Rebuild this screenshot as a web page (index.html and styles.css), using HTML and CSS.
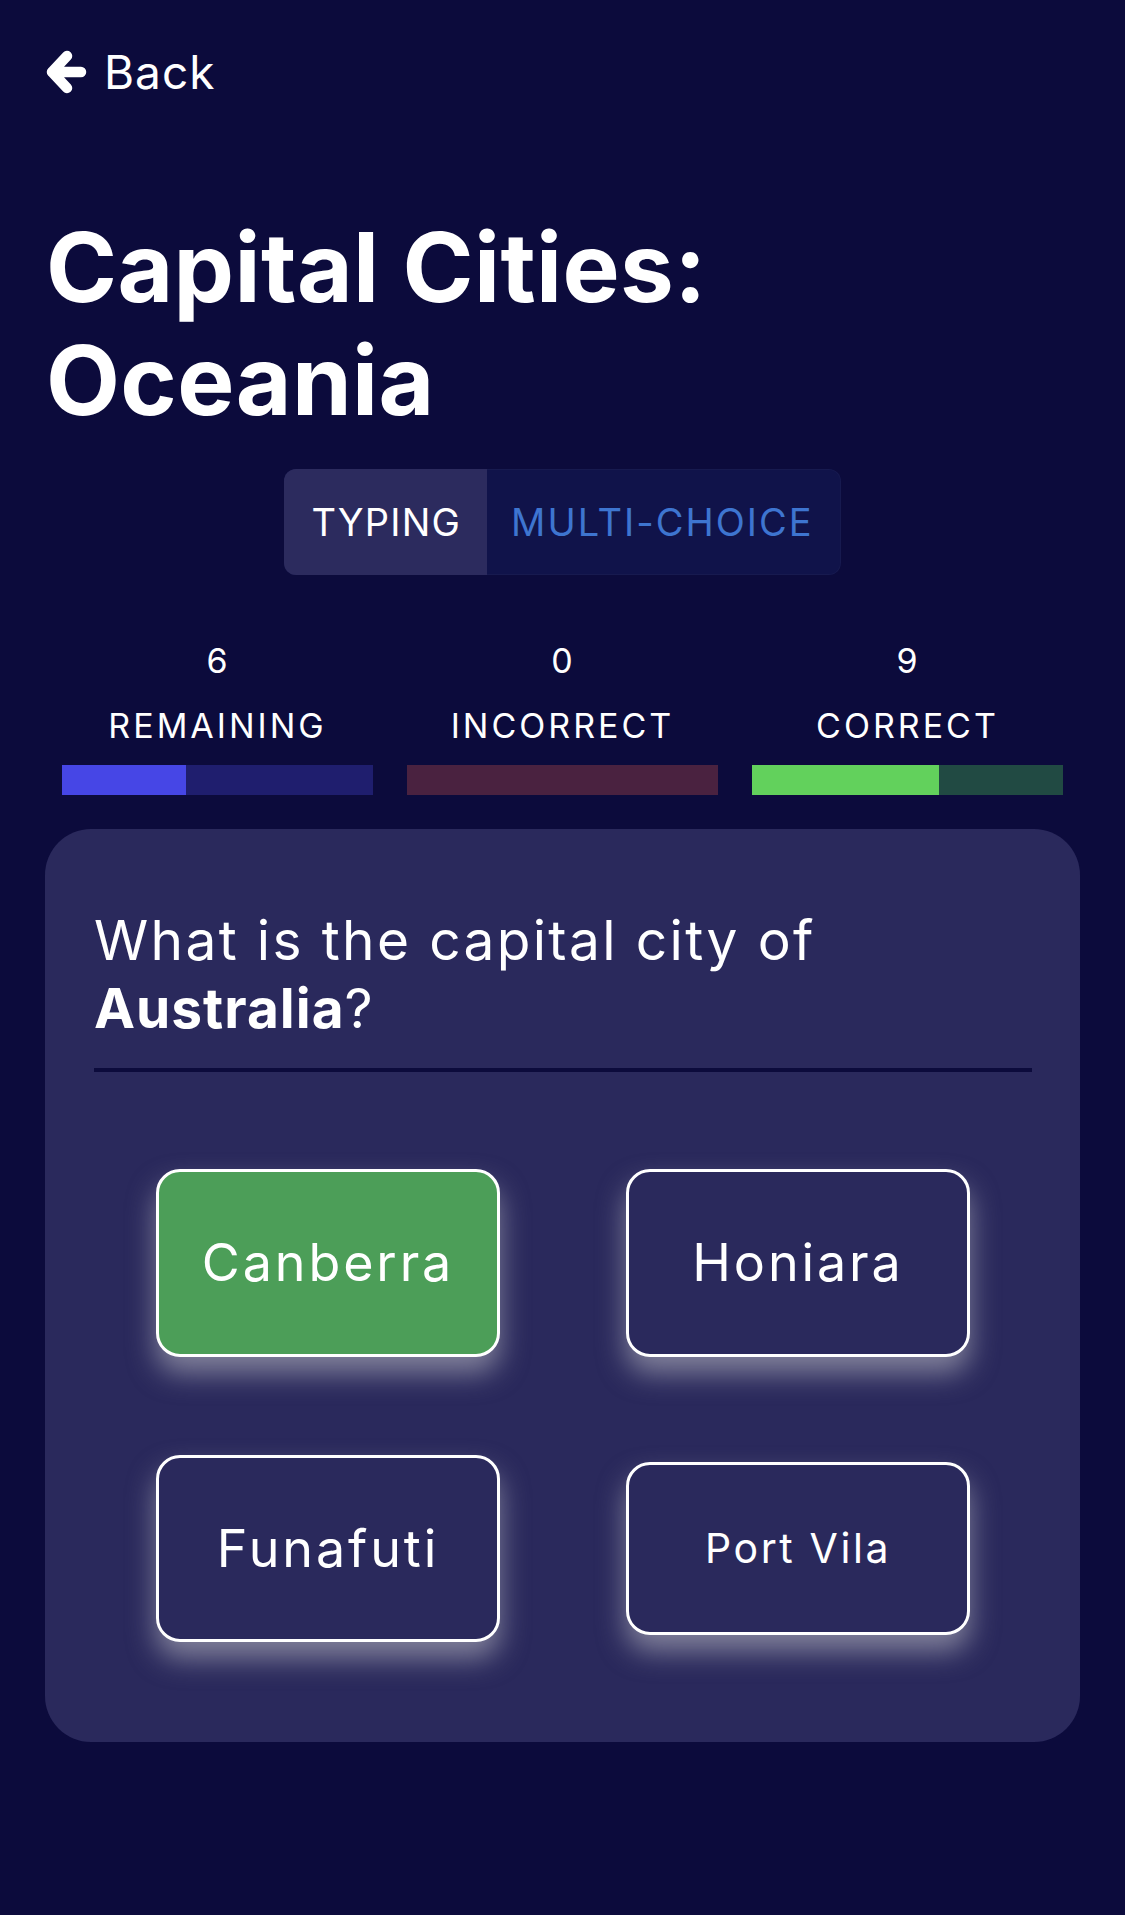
FILE: index.html
```html
<!DOCTYPE html>
<html lang="en">
<head>
<meta charset="utf-8">
<title>Capital Cities: Oceania</title>
<link rel="stylesheet" href="styles.css">
</head>
<body>
<main class="page">
  <a class="back" href="#">
    <svg class="back-icon" width="42" height="44" viewBox="0 0 42 44" aria-hidden="true">
      <path d="M22 6 L7 22 L22 38 M7 22 H36" fill="none" stroke="#fff" stroke-width="10.5" stroke-linecap="round" stroke-linejoin="round"/>
    </svg>
    <span>Back</span>
  </a>

  <h1 class="title">Capital Cities:<br>Oceania</h1>

  <div class="toggle-wrap">
    <div class="toggle">
      <span class="toggle-opt active">TYPING</span>
      <span class="toggle-opt">MULTI-CHOICE</span>
    </div>
  </div>

  <section class="stats">
    <div class="stat">
      <div class="stat-num">6</div>
      <div class="stat-label">REMAINING</div>
      <div class="bar bar-remaining"><div class="fill" style="width:40%"></div></div>
    </div>
    <div class="stat">
      <div class="stat-num">0</div>
      <div class="stat-label">INCORRECT</div>
      <div class="bar bar-incorrect"><div class="fill" style="width:0%"></div></div>
    </div>
    <div class="stat">
      <div class="stat-num">9</div>
      <div class="stat-label">CORRECT</div>
      <div class="bar bar-correct"><div class="fill" style="width:60%"></div></div>
    </div>
  </section>

  <section class="card">
    <p class="question">What is the capital city of <strong>Australia</strong>?</p>
    <hr class="divider">
    <div class="answers">
      <button class="answer correct">Canberra</button>
      <button class="answer">Honiara</button>
      <button class="answer">Funafuti</button>
      <button class="answer small">Port Vila</button>
    </div>
  </section>
</main>
</body>
</html>
```

FILE: styles.css
```css
* { box-sizing: border-box; }

html, body {
  margin: 0;
  padding: 0;
  background: #0c0b3c;
  color: #fff;
  font-family: Inter, "Open Sans", "Liberation Sans", sans-serif;
}

.page {
  width: 1125px;
  min-height: 1915px;
  padding: 44px 0 0 0;
}

.back {
  display: flex;
  align-items: center;
  gap: 17px;
  margin-left: 45px;
  color: #fff;
  text-decoration: none;
  font-size: 46px;
  line-height: 56px;
  width: max-content;
  letter-spacing: 1px;
}

.back-icon { display: block; }

.title {
  margin: 111px 0 0 0;
  padding-left: 46px;
  font-size: 96px;
  line-height: 113px;
  font-weight: 700;
  letter-spacing: 0.4px;
}

.toggle-wrap {
  display: flex;
  justify-content: center;
  margin-top: 32px;
}

.toggle {
  display: flex;
  height: 106px;
  border-radius: 12px;
  overflow: hidden;
  background: #10134a;
  box-shadow: inset 0 0 0 1px rgba(255,255,255,0.03);
}

.toggle-opt {
  display: flex;
  align-items: center;
  font-size: 38px;
  letter-spacing: 2px;
  color: #3e75d0;
  padding: 0 27px 0 24px;
}

.toggle-opt.active {
  background: #2c2b5e;
  color: #fff;
  letter-spacing: 1.2px;
  padding: 0 26px 0 27px;
}

.stats {
  display: grid;
  grid-template-columns: repeat(3, 1fr);
  column-gap: 34px;
  padding: 0 62px;
  margin-top: 66px;
}

.stat {
  display: flex;
  flex-direction: column;
  align-items: center;
}

.stat-num {
  font-size: 34px;
  line-height: 40px;
  letter-spacing: 1px;
}

.stat-label {
  margin-top: 25px;
  font-size: 34px;
  line-height: 40px;
  letter-spacing: 3px;
}

.bar {
  width: 100%;
  height: 30px;
  margin-top: 19px;
  display: flex;
}

.bar .fill { height: 100%; }

.bar-remaining { background: #1f1e6e; }
.bar-remaining .fill { background: #4646e6; }
.bar-incorrect { background: #4a2240; }
.bar-incorrect .fill { background: #d04545; }
.bar-correct { background: #214a43; }
.bar-correct .fill { background: #62d15c; }

.card {
  margin: 34px 45px 0 45px;
  background: #2a295c;
  border-radius: 46px;
  padding: 77px 48px 100px 49px;
}

.question {
  margin: 0;
  font-size: 55px;
  line-height: 68px;
  letter-spacing: 2.35px;
  font-weight: 400;
}

.question strong { font-weight: 700; letter-spacing: 1px; }

.divider {
  margin: 26px 0 0 0;
  border: 0;
  height: 4px;
  background: #0c0b3c;
}

.answers {
  display: grid;
  grid-template-columns: 344px 344px;
  justify-content: center;
  column-gap: 126px;
  row-gap: 98px;
  align-items: center;
  margin-top: 97px;
}

.answer {
  font-family: inherit;
  color: #fff;
  background: #2a295c;
  border: 3px solid #fff;
  border-radius: 24px;
  font-size: 52px;
  line-height: 1.3;
  letter-spacing: 2.9px;
  padding: 57px 10px;
  box-shadow: 0 16px 28px rgba(200, 200, 205, 0.55);
  cursor: pointer;
}

.answer.correct { background: #4c9e58; }

.answer.small {
  font-size: 41px;
  letter-spacing: 2.6px;
}
```
